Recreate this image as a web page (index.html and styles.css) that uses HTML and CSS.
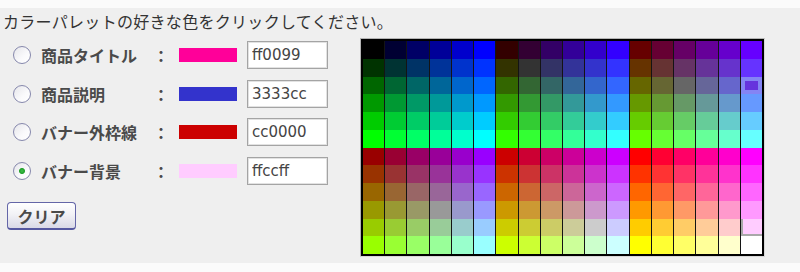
FILE: index.html
```html
<!DOCTYPE html>
<html lang="ja">
<head>
<meta charset="utf-8">
<title>カラーパレット</title>
<link rel="stylesheet" href="styles.css">
</head>
<body>
<div class="panel">
  <p class="title">カラーパレットの好きな色をクリックしてください。</p>
  <div class="main">
    <form class="form">
      <div class="row">
        <input type="radio" name="target" class="radio">
        <span class="label">商品タイトル</span><span class="colon">：</span>
        <span class="swatch swatch-title"></span>
        <input type="text" class="hex" value="ff0099">
      </div>
      <div class="row">
        <input type="radio" name="target" class="radio">
        <span class="label">商品説明</span><span class="colon">：</span>
        <span class="swatch swatch-desc"></span>
        <input type="text" class="hex" value="3333cc">
      </div>
      <div class="row">
        <input type="radio" name="target" class="radio">
        <span class="label">バナー外枠線</span><span class="colon">：</span>
        <span class="swatch swatch-border"></span>
        <input type="text" class="hex" value="cc0000">
      </div>
      <div class="row">
        <input type="radio" name="target" class="radio" checked>
        <span class="label">バナー背景</span><span class="colon">：</span>
        <span class="swatch swatch-bg"></span>
        <input type="text" class="hex" value="ffccff">
      </div>
      <button type="button" class="clear">クリア</button>
    </form>
    <div class="palette-frame">
      <div class="palette" id="palette"></div>
    </div>
  </div>
</div>
<script src="script.js"></script>
</body>
</html>
```

FILE: styles.css
```css
html, body {
  margin: 0;
  padding: 0;
  background: #fbfbfb;
}

body {
  font-family: "Noto Sans CJK JP", "Noto Sans", sans-serif;
  color: #333;
}

.panel {
  margin-top: 8px;
  height: 255px;
  background: #efefef;
  box-sizing: border-box;
}

.title {
  margin: 0;
  padding: 1px 0 5px 3px;
  font-size: 16px;
  line-height: 24px;
  letter-spacing: 0.3px;
  color: #333;
  white-space: nowrap;
}

.main {
  display: flex;
  align-items: flex-start;
}

.form {
  width: 360px;
  margin: 0;
  padding-top: 3px;
  display: flex;
  flex-direction: column;
  align-items: flex-start;
}

.row {
  display: flex;
  align-items: center;
  height: 28px;
  margin-bottom: 11px;
}

.row:nth-child(2) {
  margin-bottom: 10px;
}

.row:nth-child(4) {
  margin-bottom: 17px;
}

.radio {
  -webkit-appearance: none;
  appearance: none;
  margin: 0 10px 0 13px;
  width: 18px;
  height: 18px;
  border: 1px solid #8688ac;
  border-radius: 50%;
  box-sizing: border-box;
  background: linear-gradient(135deg, #e6e6ea 0%, #fafafc 60%, #ffffff 100%);
}

.radio:checked {
  background:
    radial-gradient(circle at 50% 50%, #3fc04a 0, #22a02c 2.5px, rgba(34,160,44,0) 3.5px),
    linear-gradient(135deg, #e6e6ea 0%, #fafafc 60%, #ffffff 100%);
}

.label {
  width: 112px;
  font-size: 16px;
  font-weight: 700;
  color: #4a4a4a;
  white-space: nowrap;
}

.colon {
  width: 16px;
  font-size: 16px;
  font-weight: 700;
  color: #4a4a4a;
}

.swatch {
  width: 58px;
  height: 14px;
  margin: 0 10px;
}

.swatch-title { background: #ff0099; }
.swatch-desc { background: #3333cc; }
.swatch-border { background: #cc0000; }
.swatch-bg { background: #ffccff; }

.hex {
  width: 81px;
  height: 28px;
  margin: 0;
  padding: 0 0 0 4px;
  box-sizing: border-box;
  border: 1px solid #a4a4a4;
  box-shadow: inset 0 0 0 1px #e2e2e2;
  background: #fff;
  font-family: "DejaVu Sans", Verdana, sans-serif;
  font-size: 15px;
  color: #444;
  outline: none;
}

.clear {
  margin: 0 0 0 7px;
  width: 69px;
  height: 28px;
  padding: 0;
  box-sizing: border-box;
  border: 1px solid #6466a8;
  border-bottom: 2px solid #5558a0;
  border-radius: 4px;
  background: linear-gradient(180deg, #ffffff 0%, #f2f2f6 45%, #d9d9e6 100%);
  font-family: "Noto Sans CJK JP", sans-serif;
  font-size: 16px;
  font-weight: 700;
  color: #4a4a4a;
  line-height: 24px;
}

.palette-frame {
  width: 405px;
  height: 219px;
  box-sizing: border-box;
  border: 1px solid #b4b4b4;
  border-right-color: #d8d8d8;
  border-bottom-color: #d8d8d8;
}

.palette {
  height: 100%;
  box-sizing: border-box;
  border: 2px solid #000;
  background: #141414;
  display: grid;
  grid-template-columns: repeat(18, 1fr);
  grid-template-rows: repeat(12, 1fr);
  column-gap: 1px;
  row-gap: 0;
}

.cell {
  position: relative;
}

.cell-hover {
  box-shadow: inset 0 0 0 4px #8484f4;
}

.cell-hover::after {
  content: "";
  position: absolute;
  left: 4px;
  top: 4px;
  right: 4px;
  bottom: 4px;
  background: #6633dd;
}

.cell-selected {
  box-shadow: inset 1px -1px 0 1px #a8a8a8;
}
```

FILE: script.js
```js
(function () {
  var hex = ["00", "33", "66", "99", "cc", "ff"];
  var palette = document.getElementById("palette");
  for (var row = 0; row < 12; row++) {
    for (var col = 0; col < 18; col++) {
      var r = (row < 6 ? 0 : 3) + Math.floor(col / 6);
      var g = row % 6;
      var b = col % 6;
      var color = hex[r] + hex[g] + hex[b];
      var cell = document.createElement("div");
      cell.className = "cell";
      cell.style.background = "#" + color;
      cell.title = color;
      if (color === "6666ff") cell.className += " cell-hover";
      if (color === "ffccff") cell.className += " cell-selected";
      palette.appendChild(cell);
    }
  }
})();
```
